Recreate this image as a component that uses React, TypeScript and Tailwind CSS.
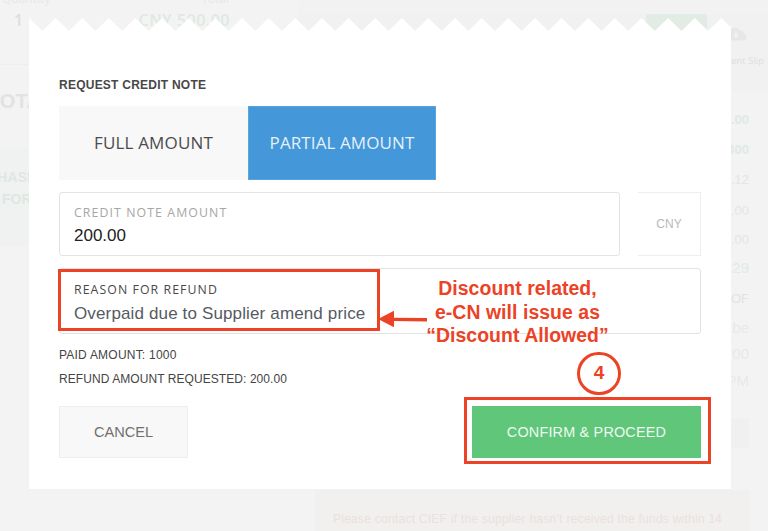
import type { ReactNode } from "react";
import clsx from "clsx";

const payments = [
  { value: "0.00", className: "h-[30px] text-[13px] font-bold text-[#dfeae3]" },
  { value: "400", className: "h-[30px] text-[13px] font-bold text-[#dfeae3]" },
  { value: "5.12", className: "h-[31px] text-[13px] text-[#e5e5e5]" },
  { value: "0.00", className: "h-[30px] text-[13px] text-[#e5e5e5]" },
  { value: "0.00", className: "h-[29px] text-[13px] text-[#e5e5e5]" },
  { value: "8.29", className: "h-[27px] text-[15px] text-[#dfece3]" },
  { value: "PROOF", className: "h-[34px] text-[13px] text-[#e2e2e2]" },
  { value: "be", className: "h-[26px] text-[15px] text-[#e9e9e9]" },
  { value: "00", className: "h-[26px] text-[15px] text-[#e9e9e9]" },
  { value: "PM", className: "h-[28px] text-[15px] text-[#e9e9e9]" },
];

// Saw-tooth top edge of the receipt, 702px wide
const TOOTH = 26.63;
function zigzagPoints() {
  const points = ["0,0"];
  for (let i = 0; i < 26; i++) {
    points.push(`${(i + 0.5) * TOOTH},13`);
    points.push(`${(i + 1) * TOOTH},0`);
  }
  points.push("702,9.6", "702,14", "0,14");
  return points.join(" ");
}

function Zigzag() {
  return (
    <svg width="702" height="14" viewBox="0 0 702 14" className="block shrink-0">
      <polygon points={zigzagPoints()} fill="#fff" />
    </svg>
  );
}

function CloudIcon() {
  return (
    <svg width="20" height="14" viewBox="0 0 20 14" className="ml-[20px] block">
      <path
        d="M4 13.5A4 4 0 0 1 2.7 6 5.3 5.3 0 0 1 12.6 3.4 3.2 3.2 0 0 1 16.8 6.8 3.4 3.4 0 0 1 16.4 13.5Z"
        fill="#e7e7e7"
      />
      <path d="M8 4.5h2v3.4h2.2L9 11.4 5.8 7.9H8Z" fill="#f1f1f1" />
    </svg>
  );
}

function Field({
  label,
  muted,
  className,
  children,
}: {
  label: string;
  muted?: boolean;
  className?: string;
  children: ReactNode;
}) {
  return (
    <div className={clsx("rounded-[3px] border border-[#e3e3e3] pl-[14px]", className)}>
      <div
        className={clsx(
          "font-['Open_Sans',sans-serif] text-[12.3px] leading-4 font-medium",
          muted
            ? "tracking-[1.1px] text-[#a6a6a6]"
            : "tracking-[1.08px] text-[#484848]"
        )}
      >
        {label}
      </div>
      {children}
    </div>
  );
}

function OrderPage() {
  return (
    <div className="flex h-full bg-[#f3f3f3]">
      {/* Order summary */}
      <div className="w-[298px] shrink-0 overflow-hidden bg-[#f3f3f3]">
        <div className="flex h-[65px] flex-col border-b border-[#eeeeee] font-['Open_Sans',sans-serif]">
          <div className="-mt-[10px] flex h-[18px] items-center justify-between pr-[69px] pl-[2px] text-[12px] text-[#e7e7e7]">
            <span>Quantity</span>
            <span>Total</span>
          </div>
          <div className="mt-[1px] flex h-[22px] items-center justify-between pr-[68px] pl-[14px] font-semibold">
            <span className="text-[16px] text-[#dedede]">1</span>
            <span className="text-[16px] tracking-[0.5px] text-[#dfe9e2]">CNY 500.00</span>
          </div>
        </div>
        <div className="-ml-[12px] flex h-[82px] items-center text-[20px] font-bold text-[#e2e2e2]">
          <span className="-mt-[10px]">TOTAL</span>
        </div>
        <div className="-ml-[12px] h-[99px] bg-[#eff2f0] pt-[19px] text-[14px] leading-[22px] font-bold text-[#e0e7e2]">
          <div>PHASE</div>
          <div className="pl-[14px]">FOR</div>
        </div>
      </div>

      {/* Payment details */}
      <div className="flex w-[470px] shrink-0 flex-col">
        <div className="h-[14px] shrink-0 bg-[#f2f2f2]" />
        <div className="flex h-[78px] shrink-0 justify-end bg-[#f1f1f1]">
          <div className="h-[30px] w-[61px] bg-[#e2ece5]" />
          <div className="flex w-[61px] flex-col items-end pt-[13px] pr-[4px]">
            <div className="w-[57px]">
              <CloudIcon />
            </div>
            <span className="mt-[12px] font-['Open_Sans',sans-serif] text-[9.5px] leading-4 whitespace-nowrap text-[#dedede]">
              Payment Slip
            </span>
          </div>
        </div>
        <div className="shrink-0 pt-[12px] pr-[19px]">
          {payments.map((row, i) => (
            <div key={i} className={clsx("flex items-center justify-end pt-px", row.className)}>
              {row.value}
            </div>
          ))}
          <div className="mt-[23px] ml-[298px] h-[30px] bg-[#f0f0f0]" />
        </div>
        <div className="mt-[42px] mr-[18px] ml-[17px] grow rounded-t-[3px] bg-[#f1f0ee] pt-[22px] pl-[18px] text-[12px] leading-[14px] tracking-[0.25px] whitespace-nowrap text-[#ebe0df]">
          Please contact CIEF if the supplier hasn’t received the funds within 14
        </div>
      </div>
    </div>
  );
}

function CreditNoteModal() {
  return (
    <div className="absolute top-[18px] left-[29px] flex h-[471px] w-[702px] flex-col">
      <Zigzag />
      <div className="flex grow flex-col bg-white pt-[44px] pr-[30px] pl-[30px]">
        <h2 className="h-[30px] text-[12px] leading-[18px] font-bold tracking-[0.24px] text-[#484848]">
          REQUEST CREDIT NOTE
        </h2>

        <div className="flex h-[74px] shrink-0 font-['Open_Sans',sans-serif] text-[17px]">
          <button className="w-[189px] bg-[#f8f8f8] tracking-[0.15px] text-[#4c4c4c]">
            FULL AMOUNT
          </button>
          <button className="w-[188px] border border-[#5ba5dd] bg-[#4497d8] tracking-[0.1px] text-[#e4f0fa]">
            PARTIAL AMOUNT
          </button>
        </div>

        <div className="mt-[12px] flex h-[64px] shrink-0 justify-between">
          <Field label="CREDIT NOTE AMOUNT" muted className="w-[561px] pt-[12px]">
            <div className="mt-[4px] text-[17px] leading-[22px] text-[#222]">200.00</div>
          </Field>
          <div className="flex w-[63px] items-center justify-center border border-l-0 border-[#eeeeee] text-[12px] text-[#b9b9b9]">
            CNY
          </div>
        </div>

        <Field label="REASON FOR REFUND" className="mt-[12px] h-[66px] shrink-0 pt-[13px]">
          <div className="mt-[5px] text-[17px] leading-[22px] tracking-[0.14px] text-[#555b62]">
            Overpaid due to Supplier amend price
          </div>
        </Field>

        <div className="mt-[9px] text-[12px] leading-[24px] text-[#444]">
          <p className="tracking-[0.22px]">PAID AMOUNT: 1000</p>
          <p className="tracking-[0.07px]">REFUND AMOUNT REQUESTED: 200.00</p>
        </div>

        <div className="mt-[15px] flex h-[52px] shrink-0 justify-between">
          <button className="w-[129px] border border-[#eeeeee] bg-[#f8f8f8] pt-[2px] text-[14.6px] text-[#707070]">
            CANCEL
          </button>
          <button className="w-[229px] bg-[#5fc67a] pt-[2px] text-[14.4px] tracking-[0.2px] text-[#effaf2]">
            CONFIRM &amp; PROCEED
          </button>
        </div>
      </div>
    </div>
  );
}

function Annotations() {
  return (
    <>
      <div className="absolute top-[269px] left-[58px] h-[62px] w-[322px] border-3 border-[#ec4225]" />
      <svg
        width="50"
        height="18"
        viewBox="0 0 50 18"
        className="absolute top-[310px] left-[378px]"
      >
        <path d="M14 9.4 49 9.8" stroke="#ec4225" strokeWidth="3.4" />
        <path d="M0 9 16 .8V17.3Z" fill="#ec4225" />
      </svg>
      <p className="absolute top-[277px] left-[417px] w-[201px] text-center text-[19.4px] leading-[23.6px] font-bold tracking-[0.07px] whitespace-nowrap text-[#ec4225]">
        Discount related,
        <br />
        e-CN will issue as
        <br />
        “Discount Allowed”
      </p>
      <div className="absolute top-[352px] left-[577px] flex h-[43px] w-[44px] items-center justify-center rounded-full border-3 border-[#ec4225] text-[19px] font-bold text-[#ec4225]">
        4
      </div>
      <div className="absolute top-[397px] left-[464px] h-[67px] w-[247px] border-3 border-[#ec4225]" />
    </>
  );
}

export default function App() {
  return (
    <div className="relative h-[531px] w-[768px] overflow-hidden bg-[#f3f3f3] font-['Liberation_Sans',Arial,sans-serif]">
      <OrderPage />
      <CreditNoteModal />
      <Annotations />
    </div>
  );
}
